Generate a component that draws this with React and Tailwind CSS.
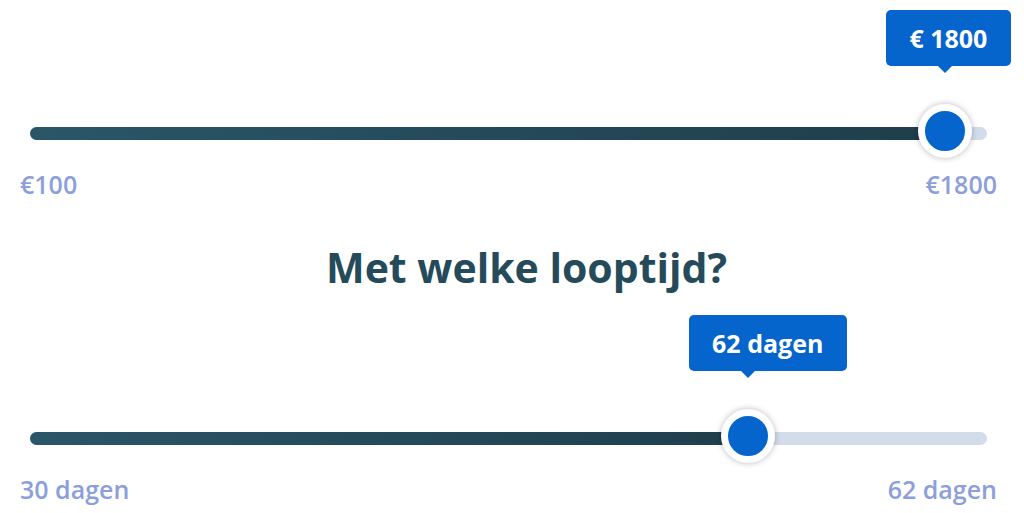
import React from "react";

function Slider({ pct, tip, tipW }) {
  return (
    <div className="relative mx-[10px] h-[13px] rounded-full bg-[#d3dcea]">
      <div
        className="h-full rounded-full bg-[linear-gradient(90deg,#2a5667,#1f3e4c)]"
        style={{ width: `${pct}%` }}
      />
      <div
        className="absolute top-[-3.5px]"
        style={{ left: `${pct}%` }}
      >
        <div className="absolute left-[-59px] top-[-114px] z-10">
          <div
            className="relative flex h-[56px] items-center justify-center rounded-[5px] bg-[#0565cc] text-[25px] font-bold leading-[34px] text-white"
            style={{ width: tipW }}
          >
            {tip}
            <div className="absolute left-[51px] top-[55px] h-0 w-0 border-x-[8px] border-t-[8px] border-x-transparent border-t-[#0565cc]" />
          </div>
        </div>
        <div className="absolute left-[-27px] top-[-20px] h-[54px] w-[54px] rounded-full border-[7px] border-white bg-[#0565cc] shadow-[0_0_6px_rgba(0,0,0,0.28)]" />
      </div>
    </div>
  );
}

export default function App() {
  return (
    <div className="flex h-[513px] w-[1024px] flex-col overflow-hidden bg-white pl-5 pr-[27px] pt-[127px] font-['Open_Sans',sans-serif]">
      <Slider pct={95.6} tip="€ 1800" tipW={125} />
      <div className="mt-[28px] flex justify-between text-[25px] font-semibold leading-[33px] text-[#8c9fdc]">
        <span>€100</span>
        <span>€1800</span>
      </div>
      <h2 className="mt-[46px] pl-[36px] text-center text-[41px] font-bold leading-[40px] text-[#254b5b]">
        Met welke looptijd?
      </h2>
      <div className="mt-[145px]">
        <Slider pct={75} tip="62 dagen" tipW={158} />
      </div>
      <div className="mt-[28px] flex justify-between text-[25px] font-semibold leading-[33px] text-[#8c9fdc]">
        <span>30 dagen</span>
        <span>62 dagen</span>
      </div>
    </div>
  );
}
